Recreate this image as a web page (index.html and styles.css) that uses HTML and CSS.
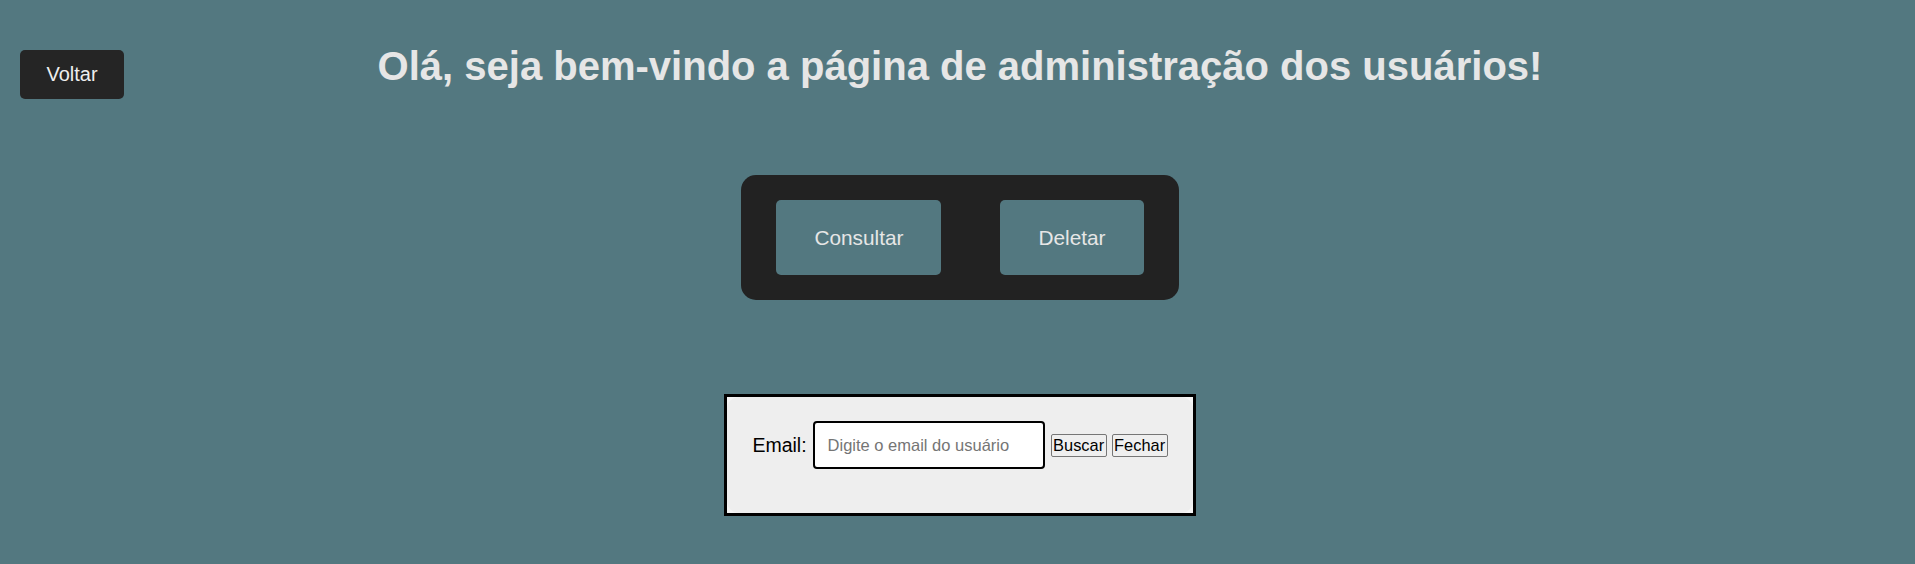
FILE: index.html
```html
<!DOCTYPE html>
<html lang="pt-BR">
<head>
<meta charset="utf-8">
<title>Administração dos usuários</title>
<link rel="stylesheet" href="styles.css">
</head>
<body>
<header class="topbar">
  <div class="left"><button class="back-btn">Voltar</button></div>
  <h1 class="title">Olá, seja bem-vindo a página de administração dos usuários!</h1>
  <div class="right"></div>
</header>
<main class="main">
  <div class="actions">
    <button class="action-btn">Consultar</button>
    <button class="action-btn">Deletar</button>
  </div>
  <div class="search-box">
    <div class="search-inner">
      <label class="email-label" for="email">Email:</label>
      <input class="email-input" id="email" type="text" placeholder="Digite o email do usuário">
      <button class="small-btn">Buscar</button> <button class="small-btn">Fechar</button>
    </div>
  </div>
</main>
</body>
</html>
```

FILE: styles.css
```css
html, body {
  margin: 0;
  padding: 0;
}
body {
  background: #537880;
  font-family: "Liberation Sans", Arial, sans-serif;
  color: #e6e6e6;
  height: 564px;
  overflow: hidden;
}
.topbar {
  display: grid;
  grid-template-columns: 1fr auto 1fr;
  align-items: start;
  padding: 43px 15px 0 20px;
}
.back-btn {
  margin-top: 7px;
  background: #252525;
  color: #eeeeee;
  border: none;
  border-radius: 5px;
  font-family: inherit;
  font-size: 20px;
  line-height: 23px;
  padding: 13px 26.5px;
  cursor: pointer;
}
.title {
  margin: 0;
  font-size: 40px;
  line-height: 46px;
  font-weight: bold;
  color: #e6e6e6;
  text-align: center;
}
.main {
  display: flex;
  flex-direction: column;
  align-items: center;
  padding-left: 5px;
}
.actions {
  margin-top: 76px;
  display: flex;
  gap: 59px;
  background: #222222;
  border-radius: 15px;
  padding: 25px 35px;
}
.action-btn {
  background: #537880;
  color: #e6e6e6;
  border: none;
  border-radius: 5px;
  font-family: inherit;
  font-size: 20.8px;
  line-height: 25px;
  padding: 25px 38px;
}
.search-box {
  margin-top: 94px;
  border: 3px solid #000;
  background: #f5f5f5;
}
.search-inner {
  background: #eeeeee;
  border-radius: 12px;
  padding: 24px 25px 44px;
  display: flex;
  align-items: center;
  color: #000;
}
.email-label {
  font-size: 19.5px;
  margin-right: 6px;
}
.email-input {
  box-sizing: border-box;
  width: 232px;
  height: 48px;
  border: 2px solid #000;
  border-radius: 4px;
  padding: 0 13px;
  font-family: inherit;
  font-size: 16.5px;
  background: #fff;
  margin-right: 6px;
}
.email-input::placeholder {
  color: #757575;
}
.small-btn {
  font-family: inherit;
  font-size: 16.4px;
  line-height: 19px;
  padding: 1px 1.5px;
  border: 1px solid #767676;
  border-radius: 2px;
  background: #efefef;
  color: #000;
  margin-right: 5px;
}
.small-btn:last-child {
  margin-right: 0;
}
```
